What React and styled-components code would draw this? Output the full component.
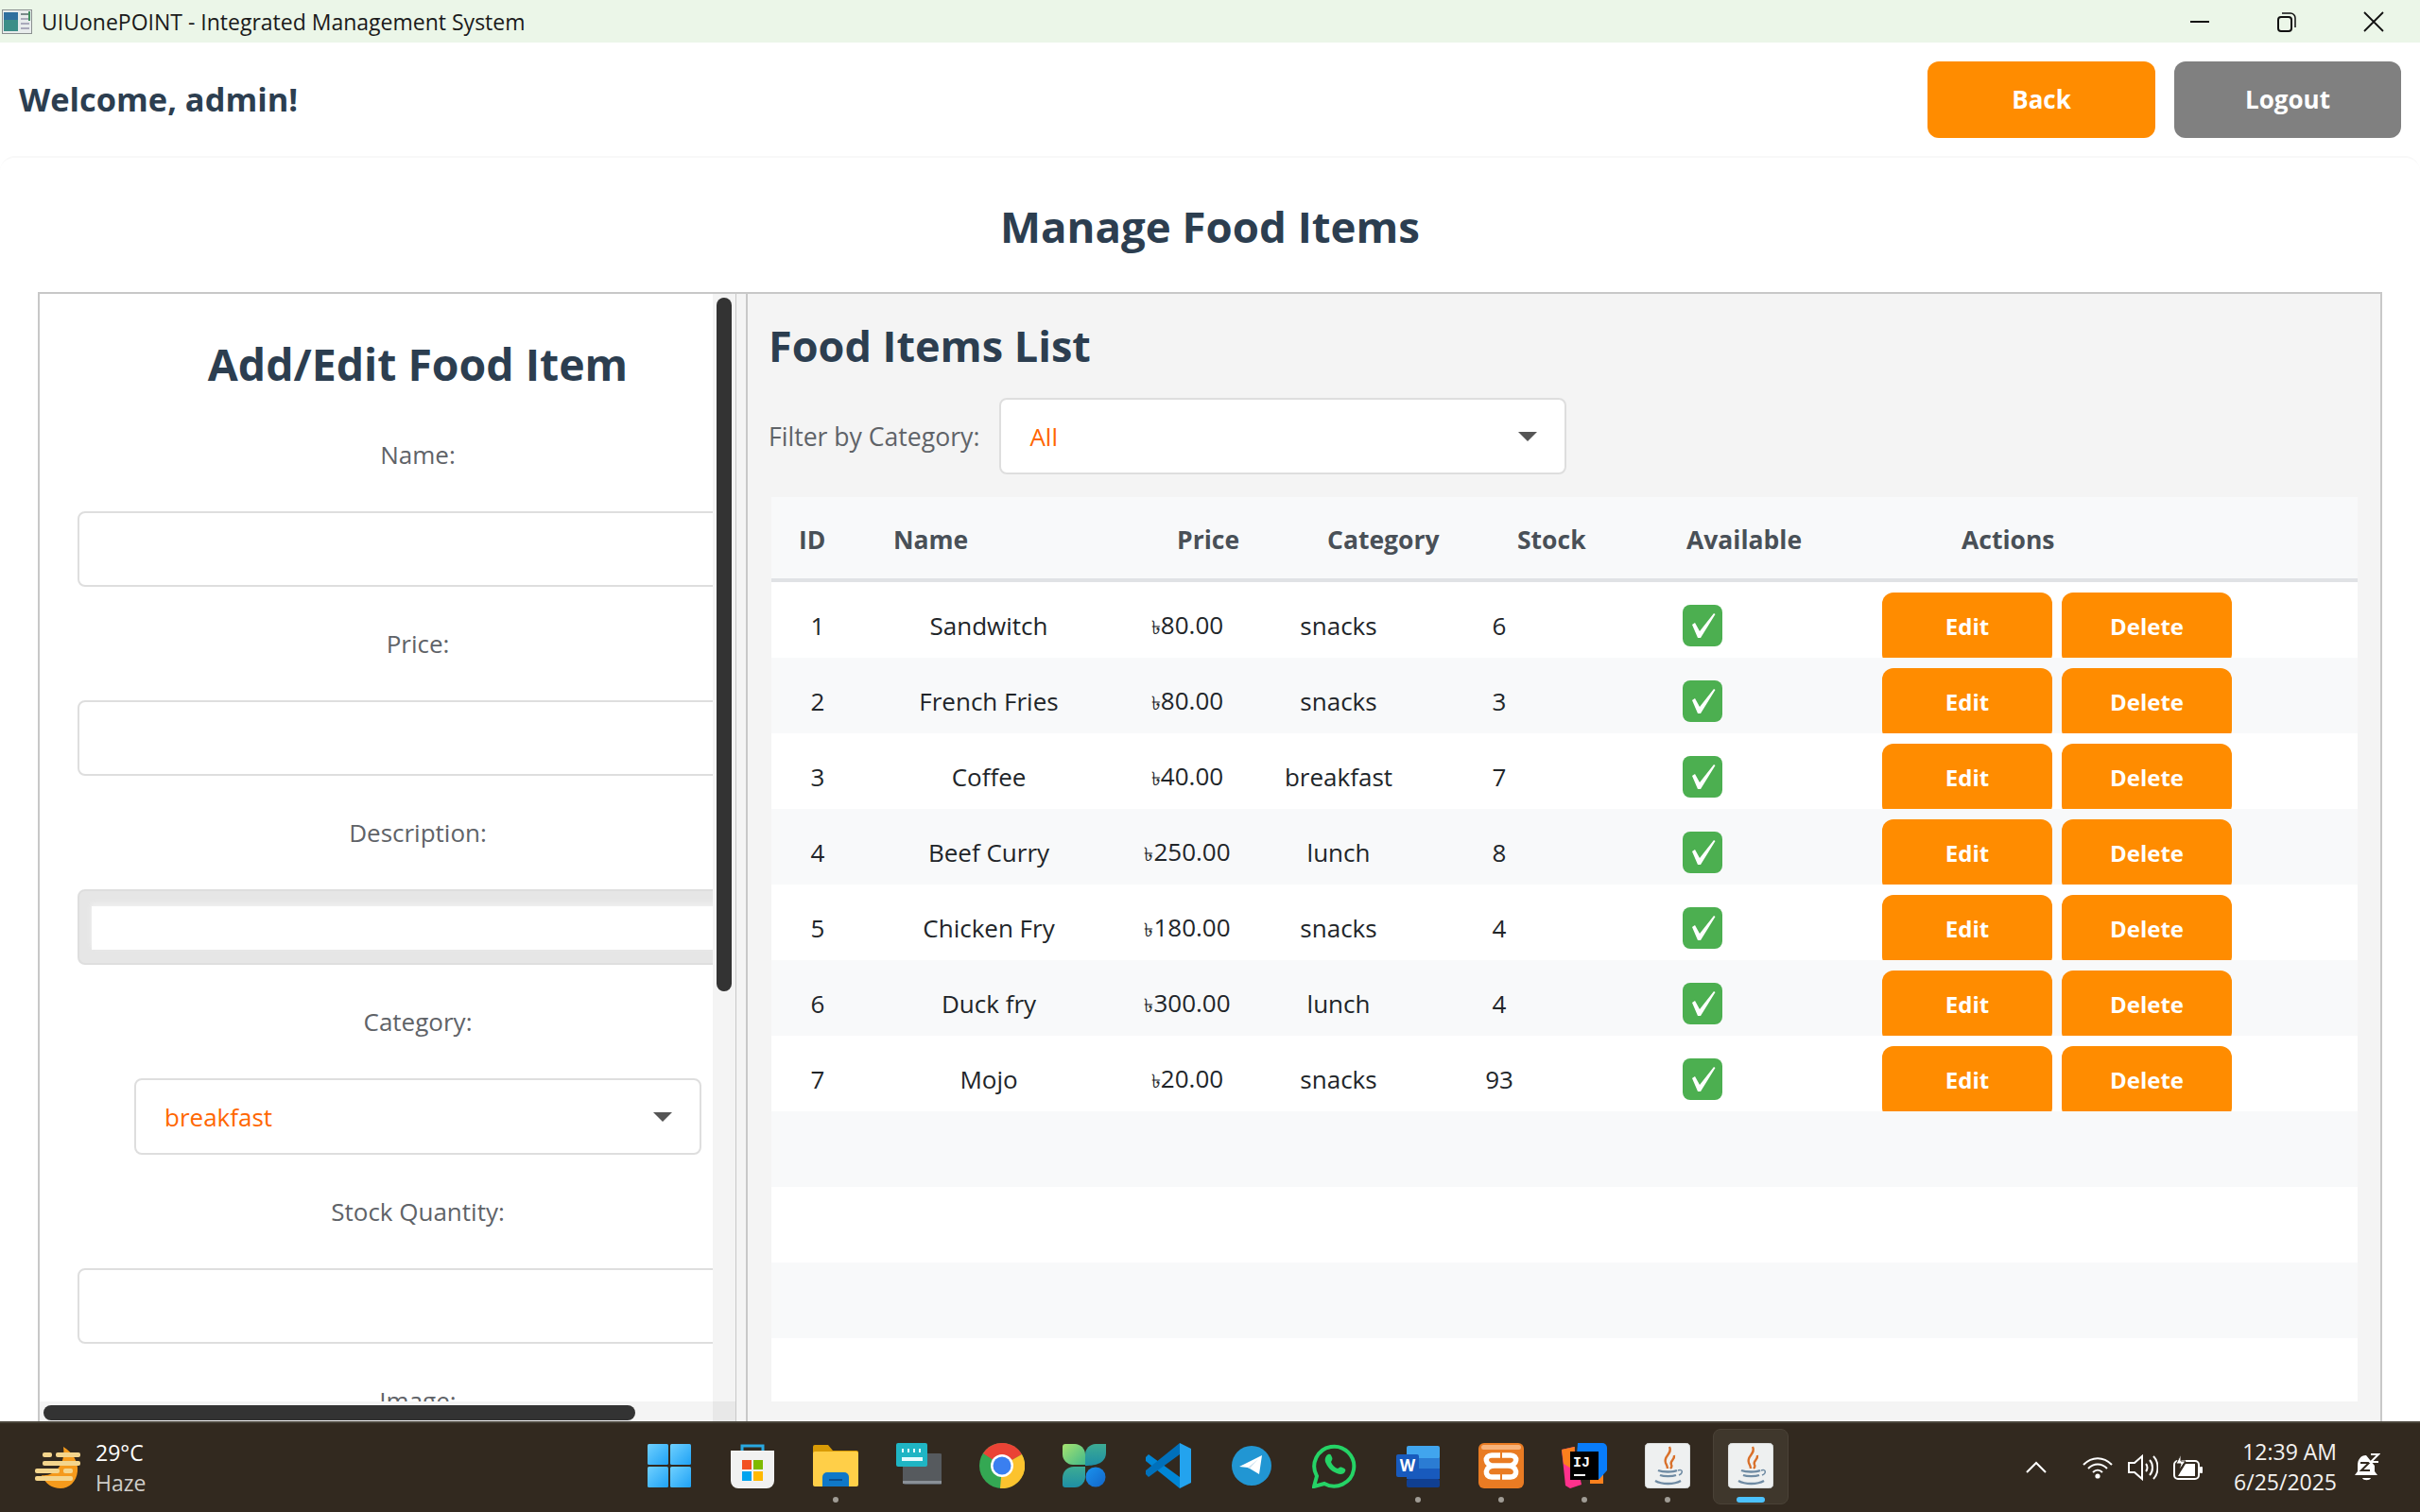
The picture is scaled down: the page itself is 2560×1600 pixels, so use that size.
import styled, { createGlobalStyle } from "styled-components";

const foods = [
  { id: 1, name: "Sandwitch", price: "80.00", category: "snacks", stock: 6 },
  { id: 2, name: "French Fries", price: "80.00", category: "snacks", stock: 3 },
  { id: 3, name: "Coffee", price: "40.00", category: "breakfast", stock: 7 },
  { id: 4, name: "Beef Curry", price: "250.00", category: "lunch", stock: 8 },
  { id: 5, name: "Chicken Fry", price: "180.00", category: "snacks", stock: 4 },
  { id: 6, name: "Duck fry", price: "300.00", category: "lunch", stock: 4 },
  { id: 7, name: "Mojo", price: "20.00", category: "snacks", stock: 93 },
];

const GlobalStyle = createGlobalStyle`
  html, body { margin: 0; padding: 0; }
  body { font-family: "Open Sans", "Noto Sans", "DejaVu Sans", sans-serif; background: #fff; }
  * { box-sizing: border-box; }
`;

const Screen = styled.div`
  width: 2560px;
  height: 1600px;
  display: flex;
  flex-direction: column;
  overflow: hidden;
  background: #fff;
`;

/* window title bar */
const TitleBar = styled.div`
  height: 45px;
  flex: none;
  display: flex;
  align-items: center;
  padding-left: 2px;
  background: #ebf6e8;
`;
const AppTitle = styled.span`
  margin-left: 10px;
  font-size: 23px;
  color: #1a1a1a;
`;
const WindowControls = styled.div`
  margin-left: auto;
  display: flex;
  align-items: center;
  gap: 70px;
  padding-right: 38px;
`;

/* welcome header */
const Header = styled.header`
  height: 120px;
  flex: none;
  display: flex;
  align-items: center;
  padding: 0 20px;
`;
const Welcome = styled.h2`
  margin: -2px 0 0;
  font-size: 34.4px;
  font-weight: 700;
  color: #2c3e50;
`;
const HeaderActions = styled.div`
  margin-left: auto;
  display: flex;
  gap: 20px;
`;
const HeaderButton = styled.button`
  width: ${(p) => p.$width}px;
  height: 81px;
  border: none;
  border-radius: 12px;
  background: ${(p) => p.$bg};
  color: #fff;
  font: 700 26px "Open Sans", sans-serif;
`;

/* main card */
const Card = styled.main`
  flex: 1;
  min-height: 0;
  display: flex;
  flex-direction: column;
  padding-top: 42px;
  border-radius: 16px 16px 0 0;
  border-top: 2px solid #f8f8f8;
`;
const PageTitle = styled.h1`
  margin: 0 0 40px;
  height: 60px;
  line-height: 60px;
  text-align: center;
  font-size: 45.6px;
  font-weight: 700;
  color: #2c3e50;
`;
const Split = styled.div`
  flex: 1;
  min-height: 0;
  margin: 0 40px;
  display: flex;
  border: 2px solid #c8c8c8;
  border-bottom: none;
`;

/* left form */
const FormPane = styled.section`
  position: relative;
  width: 736px;
  flex: none;
  overflow: hidden;
  border-top-left-radius: 12px;
`;
const Form = styled.div`
  width: 720px;
  margin-left: 40px;
  padding-top: 42px;
  display: flex;
  flex-direction: column;
  align-items: center;
  gap: 40px;
`;
const FormTitle = styled.h2`
  margin: 0 0 4px;
  height: 64px;
  line-height: 64px;
  font-size: 46.4px;
  font-weight: 700;
  color: #2c3e50;
`;
const Label = styled.div`
  height: 40px;
  line-height: 40px;
  font-size: 26px;
  color: #5f6368;
`;
const TextInput = styled.div`
  width: 100%;
  height: 80px;
  flex: none;
  border: 2px solid #dedede;
  border-radius: 8px;
  background: #fff;
`;
const TextArea = styled.div`
  width: 100%;
  height: 80px;
  flex: none;
  padding: 16px 0 14px 13px;
  border: 2px solid #dedede;
  border-radius: 8px;
  background: #e6e6e6;
`;
const TextAreaInner = styled.div`
  height: 100%;
  background: #fff;
  box-shadow: 0 -3px 5px #f0f0f0;
`;
const Select = styled.div`
  width: ${(p) => p.$width}px;
  height: 81px;
  flex: none;
  display: flex;
  align-items: center;
  justify-content: space-between;
  padding: 0 29px 0 30px;
  border: 2px solid #dedede;
  border-radius: 8px;
  background: #fff;
  font-size: 26px;
  color: #ff6600;
`;
const Caret = styled.span`
  width: 0;
  height: 0;
  border-left: 10px solid transparent;
  border-right: 10px solid transparent;
  border-top: 10px solid #555;
`;

/* scrollbars of the form pane, drawn over its content */
const VTrack = styled.div`
  position: absolute;
  top: 0;
  right: 0;
  bottom: 0;
  width: 24px;
  background: #f4f4f4;
`;
const VThumb = styled.div`
  width: 16px;
  height: 734px;
  margin: 4px 0 0 4px;
  border-radius: 8px;
  background: #333;
`;
const HTrack = styled.div`
  position: absolute;
  left: 0;
  right: 0;
  bottom: 0;
  height: 21px;
  padding-right: 24px;
  background: #f4f4f4;
`;
const HThumb = styled.div`
  width: 626px;
  height: 16px;
  margin: 4px 0 0 4px;
  border-radius: 8px;
  background: #333;
`;
const ScrollCorner = styled.div`
  position: absolute;
  right: 0;
  bottom: 0;
  width: 24px;
  height: 21px;
  background: #e8e8e8;
`;

const Divider = styled.div`
  width: 13px;
  flex: none;
  background: #f4f4f4;
  border-left: 1px solid #c8c8c8;
  border-right: 2px solid #c8c8c8;
`;

/* right list */
const ListPane = styled.section`
  flex: 1;
  min-width: 0;
  display: flex;
  flex-direction: column;
  padding: 0 24px 21px 22px;
  background: #f4f4f4;
`;
const ListTitle = styled.h2`
  margin: 24px 0 24px;
  height: 62px;
  line-height: 62px;
  font-size: 45px;
  font-weight: 700;
  color: #2c3e50;
`;
const FilterRow = styled.div`
  display: flex;
  align-items: center;
  gap: 21px;
  margin-bottom: 24px;
`;
const FilterLabel = styled.span`
  font-size: 26.6px;
  color: #5f6368;
`;
const Table = styled.div`
  flex: 1;
  min-height: 0;
  margin-left: 3px;
  overflow: hidden;
  background: #fff;
`;
const HeadRow = styled.div`
  height: 90px;
  display: grid;
  grid-template-columns: 100px 300px 159px 201px 179px 291px 1fr;
  align-items: center;
  padding: 3px 0 0 29px;
  border-bottom: 4px solid #e0e2e5;
  background: #f8f9fa;
  font-size: 26.5px;
  font-weight: 700;
  color: #495057;
`;
const Row = styled.div`
  height: 80px;
  display: grid;
  grid-template-columns: 98px 264px 156px 164px 176px 307px 1fr;
  grid-template-rows: 70px;
  align-items: center;
  overflow: hidden;
  padding-top: 11px;
  background: ${(p) => (p.$odd ? "#fff" : "#f8f9fa")};
  font-size: 26px;
  color: #212529;
`;
const Cell = styled.div`
  text-align: center;
`;
const Taka = styled.span`
  font-size: 20px;
`;
const CheckCell = styled.div`
  padding-left: 106px;
`;
const Checkbox = styled.span`
  display: block;
  width: 42px;
  height: 44px;
  border-radius: 8px;
  background: #4caf50;
`;
const Actions = styled.div`
  align-self: start;
  display: flex;
  gap: 10px;
  padding-left: 10px;
`;
const ActionButton = styled.button`
  width: 180px;
  height: 77px;
  padding: 0 0 7px;
  border: none;
  border-radius: 12px;
  background: #ff8c00;
  color: #fff;
  font: 700 24px "Open Sans", sans-serif;
`;

/* windows taskbar */
const Taskbar = styled.footer`
  height: 96px;
  flex: none;
  display: grid;
  grid-template-columns: 1fr auto 1fr;
  align-items: center;
  border-top: 2px solid #4a453b;
  background: #32291f;
  color: #fff;
`;
const Weather = styled.div`
  display: flex;
  align-items: center;
  gap: 14px;
  padding-left: 37px;
`;
const WeatherText = styled.div`
  display: flex;
  flex-direction: column;
  gap: 2px;
  font-size: 23px;
  line-height: 30px;
`;
const WeatherSub = styled.span`
  color: #cfcdc9;
`;
const TaskIcons = styled.div`
  display: flex;
`;
const TaskSlot = styled.div`
  position: relative;
  width: 88px;
  height: 94px;
  display: flex;
  align-items: center;
  justify-content: center;
  padding-bottom: 4px;
`;
const ActiveTile = styled.div`
  position: absolute;
  top: 6px;
  left: 4px;
  width: 80px;
  height: 80px;
  border-radius: 8px;
  background: #3f372c;
  border: 1px solid #4a4237;
`;
const RunDot = styled.span`
  position: absolute;
  left: ${(p) => (p.$active ? 29 : 41)}px;
  bottom: 10px;
  width: ${(p) => (p.$active ? 30 : 6)}px;
  height: 6px;
  border-radius: 3px;
  background: ${(p) => (p.$active ? "#4cc2ff" : "#a09c95")};
`;
const Tray = styled.div`
  display: flex;
  align-items: center;
  justify-content: flex-end;
  padding-right: 42px;
`;
const TrayIcons = styled.div`
  display: flex;
  align-items: center;
  gap: 16px;
  margin-left: 37px;
`;
const Clock = styled.div`
  margin: -2px 18px 0 32px;
  text-align: right;
  font-size: 23px;
  line-height: 32px;
  color: #f3f2f0;
`;

const IconBox = styled.svg`
  position: relative;
  display: block;
  flex: none;
`;

const Icon = ({ w = 48, h = 48, vb, children }) => (
  <IconBox width={w} height={h} viewBox={vb || `0 0 ${w} ${h}`}>
    {children}
  </IconBox>
);

const AppIcon = () => (
  <Icon w={32} h={26}>
    <rect x="0.5" y="0.5" width="31" height="25" fill="#e8ecec" stroke="#8a9090" />
    <rect x="2" y="3" width="15" height="20" fill="#3d8f88" />
    <rect x="2" y="3" width="15" height="8" fill="#2f6f9e" />
    <rect x="20" y="4" width="9" height="2" fill="#7a8a8a" />
    <rect x="20" y="9" width="9" height="2" fill="#aab" />
    <rect x="20" y="14" width="9" height="2" fill="#aab" />
    <rect x="20" y="19" width="9" height="2" fill="#aab" />
    <rect x="28" y="2" width="2" height="10" fill="#3f8f5f" />
  </Icon>
);

const Minimize = () => (
  <Icon w={22} h={22}>
    <path d="M1 11h20" stroke="#111" strokeWidth="2" />
  </Icon>
);
const Restore = () => (
  <Icon w={22} h={22}>
    <rect x="2" y="6" width="14" height="15" rx="3" fill="none" stroke="#111" strokeWidth="2" />
    <path d="M6 2h9a5 5 0 0 1 5 5v10" fill="none" stroke="#111" strokeWidth="1.5" />
  </Icon>
);
const CloseX = () => (
  <Icon w={22} h={22}>
    <path d="M1 1l20 20M21 1L1 21" stroke="#111" strokeWidth="1.8" />
  </Icon>
);
const Check = () => (
  <Icon w={42} h={44}>
    <path d="M10 21l3-2 5 9L33 9l1.5 1-15.5 25h-3z" fill="#fff" />
  </Icon>
);

const WeatherIcon = () => (
  <Icon w={50} h={46}>
    <path d="M30 1c10 6 16 16 15 26-1 11-9 18-18 18-9 0-16-5-20-14 12 2 26-10 23-30z" fill="#f59a1c" />
    <g fill="#f4d58d">
      <rect x="8" y="7" width="10" height="5" rx="2" />
      <rect x="22" y="7" width="26" height="5" rx="2" />
      <rect x="8" y="16" width="40" height="5" rx="2" />
      <rect x="0" y="24" width="26" height="5" rx="2" />
      <rect x="30" y="24" width="10" height="5" rx="2" />
      <rect x="0" y="32" width="40" height="5" rx="2" />
    </g>
  </Icon>
);

const WindowsLogo = () => (
  <Icon>
    <defs>
      <linearGradient id="winA" x1="0" y1="0" x2="1" y2="1">
        <stop offset="0" stopColor="#6fd0ff" />
        <stop offset="1" stopColor="#1fa2f5" />
      </linearGradient>
    </defs>
    <rect x="1" y="1" width="22" height="22" rx="1.5" fill="url(#winA)" />
    <rect x="25" y="1" width="22" height="22" rx="1.5" fill="url(#winA)" />
    <rect x="1" y="25" width="22" height="22" rx="1.5" fill="url(#winA)" />
    <rect x="25" y="25" width="22" height="22" rx="1.5" fill="url(#winA)" />
  </Icon>
);
const StoreIcon = () => (
  <Icon>
    <path d="M13 12V3h22v9" fill="none" stroke="#29a8e0" strokeWidth="3" />
    <path d="M1 8h46v32a8 8 0 0 1-8 8H9a8 8 0 0 1-8-8z" fill="#f1f1f1" />
    <rect x="13" y="18" width="10" height="10" fill="#f25022" />
    <rect x="25" y="18" width="10" height="10" fill="#7fba00" />
    <rect x="13" y="30" width="10" height="10" fill="#00a4ef" />
    <rect x="25" y="30" width="10" height="10" fill="#ffb900" />
  </Icon>
);
const FolderIcon = () => (
  <Icon>
    <path d="M0 4a2 2 0 0 1 2-2h14l5 6h25a2 2 0 0 1 2 2v34H0z" fill="#d99b06" />
    <rect x="0" y="9" width="48" height="37" rx="2" fill="#ffcf48" />
    <path d="M10 46V36a5 5 0 0 1 5-5h18a5 5 0 0 1 5 5v10z" fill="#0f78c8" />
    <rect x="17" y="38" width="14" height="2" fill="#0a4f8f" />
  </Icon>
);
const KeyboardIcon = () => (
  <Icon>
    <rect x="7" y="11" width="42" height="33" rx="3" fill="#565a5e" />
    <rect x="7" y="40" width="42" height="3" fill="#8a9097" />
    <rect x="0" y="0" width="33" height="25" rx="2" fill="#1fb5c4" />
    <g fill="#e6fbff">
      <rect x="6" y="6" width="2" height="4" />
      <rect x="12" y="6" width="2" height="4" />
      <rect x="18" y="6" width="2" height="4" />
      <rect x="24" y="6" width="2" height="4" />
      <rect x="6" y="15" width="22" height="4" />
    </g>
  </Icon>
);
const ChromeIcon = () => (
  <Icon>
    <circle cx="24" cy="24" r="24" fill="#34a853" />
    <path d="M24 24L4 11a24 24 0 0 1 41 1z" fill="#ea4335" />
    <path d="M24 24l21-12a24 24 0 0 1-23 36z" fill="#fcc32e" />
    <circle cx="24" cy="24" r="12" fill="#fff" />
    <circle cx="24" cy="24" r="9.5" fill="#3a7ff0" />
  </Icon>
);
const PhoneLinkIcon = () => (
  <Icon>
    <defs>
      <linearGradient id="plA" x1="0" y1="0" x2="1" y2="1">
        <stop offset="0" stopColor="#a6e36f" />
        <stop offset="1" stopColor="#43b98a" />
      </linearGradient>
      <linearGradient id="plB" x1="0" y1="0" x2="0" y2="1">
        <stop offset="0" stopColor="#3dab93" />
        <stop offset="1" stopColor="#1e8fa5" />
      </linearGradient>
      <linearGradient id="plC" x1="0" y1="0" x2="1" y2="1">
        <stop offset="0" stopColor="#1a93ee" />
        <stop offset="1" stopColor="#1265c8" />
      </linearGradient>
    </defs>
    <path d="M0 4a3 3 0 0 1 3-3h10c6 0 11 5 11 11v11H11C5 23 0 18 0 12z" fill="url(#plA)" />
    <path d="M46 1H35c-6 0-11 5-11 11v12c12 0 22-3 22-14z" fill="url(#plB)" />
    <path d="M0 37c0-7 5-12 12-12h12v11c0 6-5 11-11 11H3a3 3 0 0 1-3-3z" fill="url(#plB)" />
    <circle cx="35" cy="36" r="10.5" fill="url(#plC)" />
  </Icon>
);
const VsCodeIcon = () => (
  <Icon>
    <path d="M3 12L0 15v4l36 29V36z" fill="#0086d6" />
    <path d="M36 0L0 29v4l3 3 33-24z" fill="#0070bb" />
    <path d="M36 0l12 6v36l-12 6z" fill="#23a3ee" />
  </Icon>
);
const TelegramIcon = () => (
  <Icon>
    <circle cx="24" cy="24" r="21" fill="#2196d3" />
    <path d="M11 25l24-12-3 20-10-6-2-1z" fill="#fff" />
    <path d="M20 26l11-9-9 10z" fill="#d0e4f0" />
  </Icon>
);
const WhatsAppIcon = () => (
  <Icon>
    <path d="M2 46l3-11a21 21 0 1 1 8 8z" fill="none" stroke="#25d366" strokeWidth="4" />
    <path d="M17 12c2-1 3 0 4 3 1 2 0 3-1 5 1 3 4 6 7 7 2-1 3-2 5-1 3 1 4 2 3 4-1 3-5 4-9 2-6-2-10-7-12-12-1-4 1-7 3-8z" fill="#25d366" />
  </Icon>
);
const WordIcon = () => (
  <Icon w={46} h={48}>
    <rect x="11" y="3" width="35" height="14" rx="2" fill="#41a5ee" />
    <rect x="11" y="16" width="35" height="11" fill="#2b7cd3" />
    <rect x="11" y="27" width="35" height="11" fill="#185abd" />
    <rect x="11" y="38" width="35" height="9" rx="2" fill="#103f91" />
    <rect x="0" y="12" width="24" height="24" rx="2" fill="#185abd" />
    <text x="12" y="30" textAnchor="middle" fontFamily="Open Sans" fontWeight="700" fontSize="17" fill="#fff">W</text>
  </Icon>
);
const XamppIcon = () => (
  <Icon>
    <rect x="0" y="0" width="48" height="48" rx="6" fill="#e97b23" />
    <rect x="3" y="2" width="42" height="5" rx="2.5" fill="#f7b27a" />
    <g fill="none" stroke="#fff" strokeWidth="5.5">
      <path d="M23 13H14C6 13 6 24 17 24C6 24 6 36 14 36H23" />
      <path d="M25 13H34C42 13 42 24 31 24C42 24 42 36 34 36H25" />
      <path d="M17 24H31" />
    </g>
  </Icon>
);
const IntellijIcon = () => (
  <Icon>
    <path d="M0 7l13-3 8 40-12 4-5-3z" fill="#ff318c" />
    <path d="M0 7l14-3-2 24-10-6z" fill="#fc801d" />
    <rect x="30" y="30" width="14" height="13" fill="#fc801d" />
    <path d="M17 0h26a5 5 0 0 1 5 5v24l-8 9H14z" fill="#087cfa" />
    <rect x="9" y="9" width="30" height="30" fill="#000" />
    <text x="12" y="25" fontFamily="Liberation Mono" fontWeight="700" fontSize="15" fill="#fff">IJ</text>
    <rect x="13" y="33" width="12" height="2" fill="#fff" />
  </Icon>
);
const JavaIcon = () => (
  <Icon>
    <rect x="0" y="0" width="48" height="48" rx="5" fill="#eef0f0" stroke="#c9cccc" />
    <g fill="none" stroke="#d9702a" strokeWidth="2.4">
      <path d="M26 4c4 7-7 10-4 17 1 2 2 4 2 6" />
      <path d="M31 13c1 5-5 6-3 10 1 1 0 3-1 4" />
    </g>
    <g fill="none" stroke="#6f8ba3" strokeWidth="2.4">
      <path d="M14 29c5 2 16 2 20 0" />
      <path d="M16 34c4 1.500 13 1.500 17 0" />
      <path d="M11 40c7 4 20 4 27 0" />
      <path d="M35 29c5-2 6 3 1 5" strokeWidth="1.500" />
    </g>
  </Icon>
);

const taskIcons = [
  { Comp: WindowsLogo },
  { Comp: StoreIcon },
  { Comp: FolderIcon, running: true },
  { Comp: KeyboardIcon },
  { Comp: ChromeIcon },
  { Comp: PhoneLinkIcon },
  { Comp: VsCodeIcon },
  { Comp: TelegramIcon },
  { Comp: WhatsAppIcon },
  { Comp: WordIcon, running: true },
  { Comp: XamppIcon, running: true },
  { Comp: IntellijIcon, running: true },
  { Comp: JavaIcon, running: true },
  { Comp: JavaIcon, active: true },
];

const Chevron = () => (
  <Icon w={24} h={14}>
    <path d="M2 12L12 2l10 10" fill="none" stroke="#fff" strokeWidth="2" />
  </Icon>
);
const Wifi = () => (
  <Icon w={32} h={24}>
    <g fill="none" stroke="#fff" strokeWidth="2">
      <path d="M1 9c9-9 21-9 30 0" />
      <path d="M6 13c6-6 14-6 20 0" />
      <path d="M11 17c3-3 7-3 10 0" />
    </g>
    <circle cx="16" cy="21" r="2.6" fill="#fff" />
  </Icon>
);
const Volume = () => (
  <Icon w={32} h={28}>
    <path d="M1 9h6l8-7v24l-8-7H1z" fill="none" stroke="#fff" strokeWidth="2" />
    <g fill="none" stroke="#fff" strokeWidth="2">
      <path d="M19 10c2 2 2 6 0 8" />
      <path d="M23 6c4 4 4 12 0 16" />
      <path d="M27 2c6 6 6 18 0 24" />
    </g>
  </Icon>
);
const Battery = () => (
  <Icon w={32} h={28}>
    <rect x="1" y="7" width="26" height="19" rx="4" fill="none" stroke="#fff" strokeWidth="2" />
    <rect x="28" y="13" width="3" height="7" rx="1" fill="#fff" />
    <path d="M5 23l8-13h10v13z" fill="#fff" />
    <path d="M8 0L3 10h5l-2 7 7-10H8z" fill="#fff" stroke="#32291f" />
  </Icon>
);
const BellSnooze = () => (
  <Icon w={28} h={32}>
    <path d="M13 3C7 3 4 8 4 13v7l-3 4h24l-3-4v-6" fill="#fff" />
    <path d="M9 27h9c-1 3-8 3-9 0z" fill="#fff" />
    <path d="M7 11h9l-8 8h9" fill="none" stroke="#32291f" strokeWidth="2" />
    <path d="M18 2h8l-8 8h8" fill="none" stroke="#fff" strokeWidth="2" />
  </Icon>
);

const Field = ({ label, children }) => (
  <>
    <Label>{label}</Label>
    {children}
  </>
);

const App = () => (
  <Screen>
    <GlobalStyle />
    <TitleBar>
      <AppIcon />
      <AppTitle>UIUonePOINT - Integrated Management System</AppTitle>
      <WindowControls>
        <Minimize />
        <Restore />
        <CloseX />
      </WindowControls>
    </TitleBar>

    <Header>
      <Welcome>Welcome, admin!</Welcome>
      <HeaderActions>
        <HeaderButton $bg="#ff8c00" $width={241}>Back</HeaderButton>
        <HeaderButton $bg="#808080" $width={240}>Logout</HeaderButton>
      </HeaderActions>
    </Header>

    <Card>
      <PageTitle>Manage Food Items</PageTitle>
      <Split>
        <FormPane>
          <Form>
            <FormTitle>Add/Edit Food Item</FormTitle>
            <Field label="Name:"><TextInput /></Field>
            <Field label="Price:"><TextInput /></Field>
            <Field label="Description:">
              <TextArea><TextAreaInner /></TextArea>
            </Field>
            <Field label="Category:">
              <Select $width={600}>breakfast<Caret /></Select>
            </Field>
            <Field label="Stock Quantity:"><TextInput /></Field>
            <Label>Image:</Label>
          </Form>
          <VTrack><VThumb /></VTrack>
          <HTrack><HThumb /></HTrack>
          <ScrollCorner />
        </FormPane>

        <Divider />

        <ListPane>
          <ListTitle>Food Items List</ListTitle>
          <FilterRow>
            <FilterLabel>Filter by Category:</FilterLabel>
            <Select $width={600}>All<Caret /></Select>
          </FilterRow>
          <Table>
            <HeadRow>
              <span>ID</span>
              <span>Name</span>
              <span>Price</span>
              <span>Category</span>
              <span>Stock</span>
              <span>Available</span>
              <span>Actions</span>
            </HeadRow>
            {foods.map((food, i) => (
              <Row key={food.id} $odd={i % 2 === 0}>
                <Cell>{food.id}</Cell>
                <Cell>{food.name}</Cell>
                <Cell><Taka>৳</Taka>{food.price}</Cell>
                <Cell>{food.category}</Cell>
                <Cell>{food.stock}</Cell>
                <CheckCell>
                  <Checkbox><Check /></Checkbox>
                </CheckCell>
                <Actions>
                  <ActionButton>Edit</ActionButton>
                  <ActionButton>Delete</ActionButton>
                </Actions>
              </Row>
            ))}
            {[7, 8, 9, 10].map((i) => (
              <Row key={i} $odd={i % 2 === 0} />
            ))}
          </Table>
        </ListPane>
      </Split>
    </Card>

    <Taskbar>
      <Weather>
        <WeatherIcon />
        <WeatherText>
          <span>29°C</span>
          <WeatherSub>Haze</WeatherSub>
        </WeatherText>
      </Weather>
      <TaskIcons>
        {taskIcons.map(({ Comp, running, active }, i) => (
          <TaskSlot key={i}>
            {active && <ActiveTile />}
            <Comp />
            {(running || active) && <RunDot $active={active} />}
          </TaskSlot>
        ))}
      </TaskIcons>
      <Tray>
        <Chevron />
        <TrayIcons>
          <Wifi />
          <Volume />
          <Battery />
        </TrayIcons>
        <Clock>
          <div>12:39 AM</div>
          <div>6/25/2025</div>
        </Clock>
        <BellSnooze />
      </Tray>
    </Taskbar>
  </Screen>
);

export default App;
